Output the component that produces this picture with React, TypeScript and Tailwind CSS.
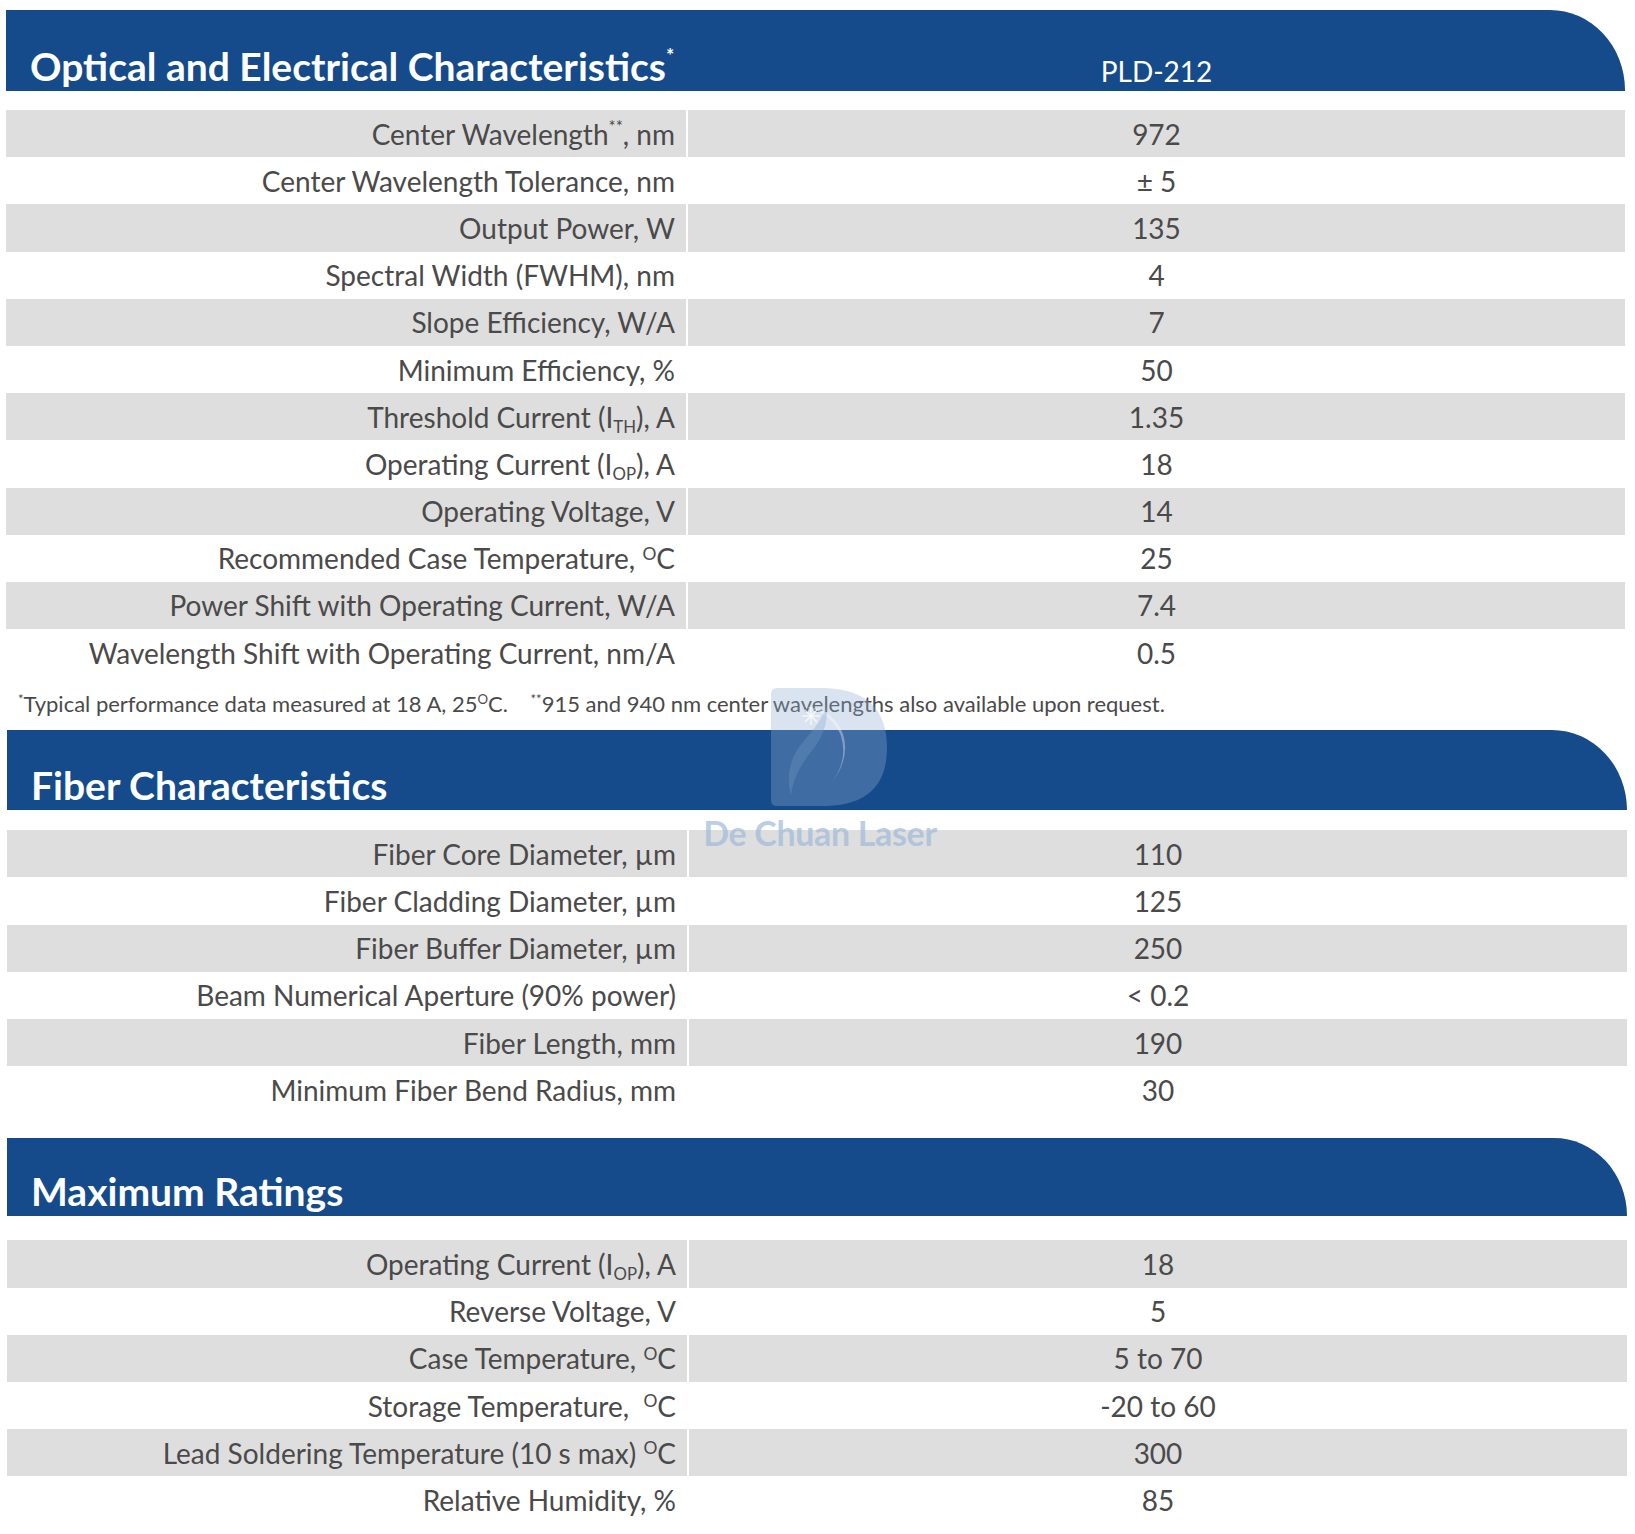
import React from "react";

type Row = { label: React.ReactNode; value: React.ReactNode };

const Deg = () => (
  <>
    <sup className="text-[0.62em] align-[0.55em] top-0">O</sup>C
  </>
);

const Sub = ({ children }: { children: React.ReactNode }) => (
  <sub className="text-[0.6em] align-[-0.3em] bottom-0">{children}</sub>
);

const optical: Row[] = [
  { label: <>Center Wavelength<sup className="text-[0.6em] align-[0.7em] top-0">**</sup>, nm</>, value: "972" },
  { label: "Center Wavelength Tolerance, nm", value: "± 5" },
  { label: "Output Power, W", value: "135" },
  { label: "Spectral Width (FWHM), nm", value: "4" },
  { label: "Slope Efficiency, W/A", value: "7" },
  { label: "Minimum Efficiency, %", value: "50" },
  { label: <>Threshold Current (I<Sub>TH</Sub>), A</>, value: "1.35" },
  { label: <>Operating Current (I<Sub>OP</Sub>), A</>, value: "18" },
  { label: "Operating Voltage, V", value: "14" },
  { label: <>Recommended Case Temperature, <Deg /></>, value: "25" },
  { label: "Power Shift with Operating Current, W/A", value: "7.4" },
  { label: "Wavelength Shift with Operating Current, nm/A", value: "0.5" },
];

const fiber: Row[] = [
  { label: "Fiber Core Diameter, µm", value: "110" },
  { label: "Fiber Cladding Diameter, µm", value: "125" },
  { label: "Fiber Buffer Diameter, µm", value: "250" },
  { label: "Beam Numerical Aperture (90% power)", value: "< 0.2" },
  { label: "Fiber Length, mm", value: "190" },
  { label: "Minimum Fiber Bend Radius, mm", value: "30" },
];

const maxRatings: Row[] = [
  { label: <>Operating Current (I<Sub>OP</Sub>), A</>, value: "18" },
  { label: "Reverse Voltage, V", value: "5" },
  { label: <>Case Temperature, <Deg /></>, value: "5 to 70" },
  { label: <>Storage Temperature,&nbsp; <Deg /></>, value: "-20 to 60" },
  { label: <>Lead Soldering Temperature (10 s max) <Deg /></>, value: "300" },
  { label: "Relative Humidity, %", value: "85" },
];

function Header({ title, right, h }: { title: React.ReactNode; right?: string; h: string }) {
  return (
    <div className={`${h} bg-[#154a8b] rounded-tr-[75px_80px] flex items-end pb-[5px]`}>
      <div className="w-[682px] pl-[24px] text-white font-bold text-[39px] leading-none whitespace-nowrap">{title}</div>
      {right && <div className="flex-1 text-center text-white text-[28px] leading-none pb-[1px]">{right}</div>}
    </div>
  );
}

function Table({ rows }: { rows: Row[] }) {
  return (
    <div className="flex flex-col">
      {rows.map((r, i) => (
        <div key={i} className="flex h-[47.2px] gap-[2px]">
          <div className={`w-[680px] flex items-center justify-end pr-[11px] ${i % 2 === 0 ? "bg-[#dedede]" : ""}`}>
            <span className="leading-none whitespace-nowrap">{r.label}</span>
          </div>
          <div className={`flex-1 flex items-center justify-center ${i % 2 === 0 ? "bg-[#dedede]" : ""}`}>
            <span className="leading-none whitespace-nowrap">{r.value}</span>
          </div>
        </div>
      ))}
    </div>
  );
}

function Watermark() {
  return (
    <div className="absolute left-[700px] top-[686px] w-[240px] h-[170px] pointer-events-none flex flex-col items-center gap-[8px]">
      <svg width="130" height="122" viewBox="0 0 130 122" className="ml-[15px]">
        <path
          d="M8 8 Q8 2 14 2 L62 2 Q124 4 124 62 Q124 118 64 120 L14 120 Q8 120 8 114 Z"
          fill="#8fb0d3"
          fillOpacity="0.34"
        />
        <path d="M40 20 Q70 22 80 48 Q88 74 66 100 Q86 76 78 50 Q70 28 40 20 Z" fill="#ffffff" fillOpacity="0.35" />
        <path d="M28 110 Q20 80 40 56 Q58 36 64 20 Q66 44 48 66 Q30 88 28 110 Z" fill="#7aa0c8" fillOpacity="0.3" />
        <g stroke="#ffffff" strokeOpacity="0.8" strokeWidth="1.2">
          <line x1="42" y1="24" x2="54" y2="36" />
          <line x1="54" y1="24" x2="42" y2="36" />
          <line x1="48" y1="21" x2="48" y2="39" />
          <line x1="39" y1="30" x2="57" y2="30" />
        </g>
      </svg>
      <div className="text-[34px] font-bold leading-none text-[#9db9d8]/70 tracking-[-0.01em] whitespace-nowrap">
        De Chuan Laser
      </div>
    </div>
  );
}

export default function App() {
  return (
    <div className="relative w-[1635px] h-[1534px] bg-white font-['Lato','Open_Sans',sans-serif] text-[#4a4a4a] text-[28px] overflow-hidden">
      <div className="pl-[6px] pr-[10px] pt-[10px]">
        <Header
          h="h-[81px]"
          title={
            <>
              Optical and Electrical Characteristics
              <sup className="text-[0.5em] align-[1em] top-0">*</sup>
            </>
          }
          right="PLD-212"
        />
        <div className="h-[19px]" />
        <Table rows={optical} />
        <div className="h-[54px] flex items-center pl-[12px] text-[22px] whitespace-nowrap">
          <span>
            <sup className="text-[0.6em] align-[0.6em] top-0">*</sup>Typical performance data measured at 18 A, 25
            <sup className="text-[0.6em] align-[0.6em] top-0">O</sup>C.&nbsp;&nbsp;&nbsp;&nbsp;
            <sup className="text-[0.6em] align-[0.6em] top-0">**</sup>915 and 940 nm center wavelengths also available
            upon request.
          </span>
        </div>
      </div>
      <div className="pl-[7px] pr-[8px]">
        <Header h="h-[80px]" title="Fiber Characteristics" />
        <div className="h-[20px]" />
        <Table rows={fiber} />
        <div className="h-[25px]" />
        <Header h="h-[78px]" title="Maximum Ratings" />
        <div className="h-[24px]" />
        <Table rows={maxRatings} />
      </div>
      <Watermark />
    </div>
  );
}
